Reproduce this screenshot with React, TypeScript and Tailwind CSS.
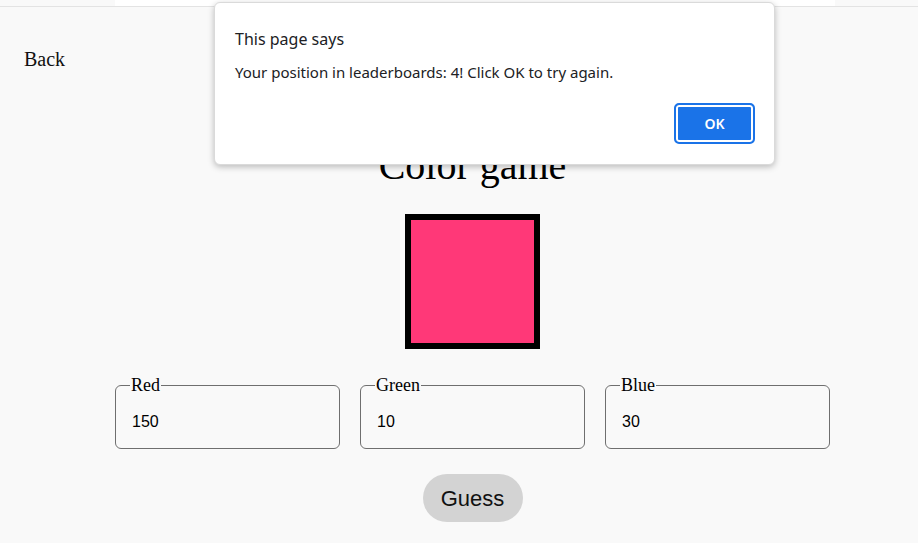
import { useState } from 'react';

const channels = [
  { label: 'Red', value: '150' },
  { label: 'Green', value: '10' },
  { label: 'Blue', value: '30' },
];

const ChannelField = ({ label, value }: { label: string; value: string }) => (
  <fieldset className="w-[225px] rounded-[6px] border border-[#6f6f6f] pl-[16px] pr-3 pb-[17px]">
    <legend className="-ml-[2px] px-[1px] font-['Liberation_Serif',serif] text-[18px] leading-[21px] text-black">{label}</legend>
    <input
      defaultValue={value}
      className="mt-[16px] block w-full bg-transparent font-['Liberation_Sans',sans-serif] text-[16px] leading-[19px] text-black outline-none"
    />
  </fieldset>
);

export default function App() {
  const [open, setOpen] = useState(true);

  return (
    <div className="relative min-h-[543px] overflow-hidden bg-[#f9f9f9] font-['Liberation_Serif',serif] text-black">
      <div className="h-[7px] border-b border-[#e3e3e3]">
        <div className="ml-[115px] h-[6px] w-[720px] bg-white" />
      </div>

      <a href="#" className="ml-6 mt-[41px] block w-fit text-[20px] leading-[23px] text-[#111]">
        Back
      </a>

      <div className="flex flex-col items-center pl-[27px]">
        <h1 className="mt-[72px] text-[40px] font-normal leading-[46px]">Color game</h1>

        <div className="mt-[25px] h-[135px] w-[135px] border-[6px] border-black bg-[#ff3878]" />

        <div className="mt-[26px] flex gap-5">
          {channels.map((c) => (
            <ChannelField key={c.label} label={c.label} value={c.value} />
          ))}
        </div>

        <button className="mt-[25px] h-12 w-[100px] rounded-full bg-[#d3d3d3] font-['Liberation_Sans',sans-serif] text-[22px] text-[#111]">
          Guess
        </button>
      </div>

      {open && (
        <div className="absolute left-[214px] top-[2px] h-[163px] w-[561px] rounded-[6px] border border-[#dadada] bg-white font-['Noto_Sans',sans-serif] shadow-[0_2px_6px_rgba(0,0,0,0.25)]">
          <p className="ml-[20px] mt-[25px] text-[16px] leading-[22px] text-[#202124]">This page says</p>
          <p className="ml-[20px] mt-[12px] text-[15px] leading-[20px] text-[#202124]">
            Your position in leaderboards: 4! Click OK to try again.
          </p>
          <div className="mr-[19px] mt-[21px] flex justify-end">
            <button
              onClick={() => setOpen(false)}
              className="h-[41px] w-[81px] rounded-[5px] border-2 border-[#1a73e8] bg-[#1a73e8] text-[14px] font-semibold text-white ring-2 ring-inset ring-white"
            >
              OK
            </button>
          </div>
        </div>
      )}
    </div>
  );
}
